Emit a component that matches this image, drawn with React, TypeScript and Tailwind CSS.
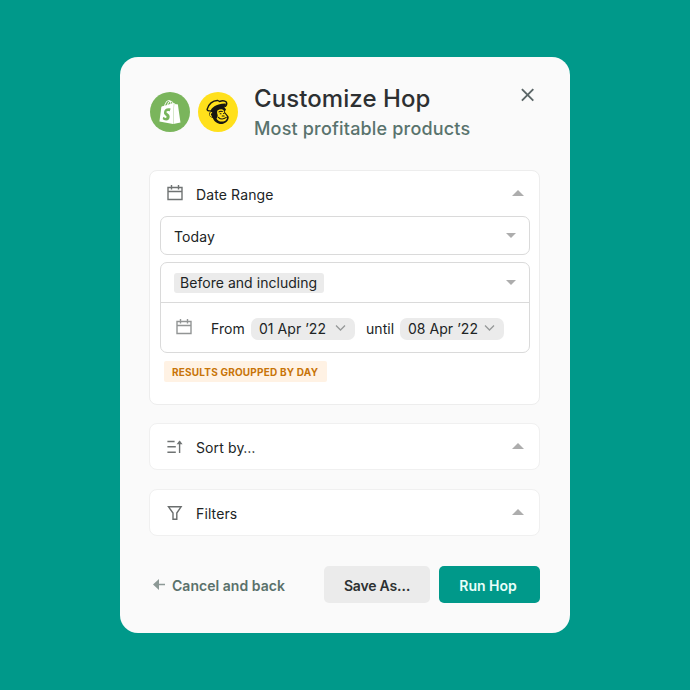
import type { ReactNode } from "react";
import { SiShopify } from "react-icons/si";

function CalendarIcon({ className }: { className: string }) {
  return (
    <svg className={className} width="16" height="16" viewBox="0 0 16 16" fill="none" stroke="currentColor" strokeWidth="1.4">
      <path d="M1 2.5h14v12H1zM1 6.5h14M4.5 0v4.4M11.5 0v4.4" />
    </svg>
  );
}

function MailchimpLogo() {
  return (
    <svg width="26" height="26" viewBox="0 0 26 26" fill="none" strokeLinecap="round" strokeLinejoin="round">
      <path d="M7 8.5 18 6l3 4.5-1.4 2.2 3.8 4.6c1 1.7-.6 6.3-5.2 7.4-4.6 1-8.8-1.6-10.4-5.8-2.4-.4-4-2.2-3.6-4.3.3-1.5 1.3-2.4 2.4-2.8z" fill="#171612" />
      <path d="M12.4 11.6c2.1-1.4 4.3-1.8 6.1-.7l.8 3 2.7 3.5c.6 2.8-1.9 5.3-5 5.2-2.8-.1-4.7-1.5-5.5-3.2 1.2-1.2 1.4-2.4 1-3.8-.4-1.4-.6-2.6-.1-4z" fill="#ffe01b" />
      <path d="M6.6 13.7c-1.6.1-1.9 2.7-.2 3.5" stroke="#ffe01b" strokeWidth="1.2" />
      <path d="M2.1 10.4C3.2 5.2 8 1.2 12.8 1.5l1.7 1c2.2-.9 5.4-.8 6.8.6.8 1.4.3 3.1-.8 4.3-3.6-1.4-8.2-.6-13.5 3.9-2.2 1-4.8.8-4.9-.9z" fill="#ffe01b" stroke="#171612" strokeWidth="1.4" />
      <path d="M13.6 5.6c2.4-.9 4.6-1.3 7.2-1.2.2 1.2-.1 2.2-.6 2.9-4.5-1-8.7 0-13.1 3.9l-1.2-.8c2.2-2.4 4.8-4 7.7-4.8z" fill="#171612" />
      <path d="M14 12.9c1.1-.8 2.2-.9 3.3-.4M15.2 14.7h.8M18.6 14.5h.4M17.2 17h1.9M13.4 18.3c2.1 2.1 5.3 2 7.9.1" stroke="#171612" strokeWidth="1.1" />
    </svg>
  );
}

function SortIcon() {
  return (
    <svg className="mt-0.5 text-[#6f7373]" width="16" height="14" viewBox="0 0 16 14" fill="none" stroke="currentColor" strokeWidth="1.4">
      <path d="M.4 1.5h7.2M.4 6.7h8.4M.4 12.3h8.4M12.6 13V1.6" />
      <path d="m9.6 4.2 3-3.7 3 3.7z" fill="currentColor" stroke="none" />
    </svg>
  );
}

function FilterIcon() {
  return (
    <svg className="mt-0.5 text-[#6a6e6e]" width="16" height="16" viewBox="0 0 16 16" fill="none" stroke="currentColor" strokeWidth="1.4">
      <path d="M1.5 1.8h12.6L9.8 8v6.3H6V8z" />
    </svg>
  );
}

function Triangle({ up = false }: { up?: boolean }) {
  return up ? (
    <svg className="mb-0.5" width="12" height="6" viewBox="0 0 12 6" fill="#adadad"><path d="M0 6 6 0l6 6z" /></svg>
  ) : (
    <svg width="10" height="5" viewBox="0 0 10 5" fill="#adadad"><path d="M0 0h10L5 5z" /></svg>
  );
}

function SectionHeader({ icon, label }: { icon: ReactNode; label: string }) {
  return (
    <div className="flex h-[45px] items-center pr-[15px] pl-[17px]">
      <span className="mb-px flex w-4 justify-center">{icon}</span>
      <span className="mt-[3px] ml-[13px] flex-1 tracking-[0.12px]">{label}</span>
      <Triangle up />
    </div>
  );
}

function DateChip({ date }: { date: string }) {
  return (
    <span className="flex h-[22px] w-[104px] items-center justify-between rounded-[7px] bg-[#ebebeb] pr-[9px] pl-2">
      <span className="mt-px">{date}</span>
      <svg className="mb-0.5" width="11" height="6" viewBox="0 0 11 6" fill="none" stroke="#969999" strokeWidth="1.3"><path d="m1 .5 4.5 4.5L10 .5" /></svg>
    </span>
  );
}

export default function App() {
  return (
    <main className="flex h-[690px] w-[690px] justify-center bg-[#00998a] pt-[57px] font-['Inter',sans-serif] text-sm leading-5 font-normal text-[#202425]">
      <section className="h-[576px] w-[450px] rounded-[18px] bg-[#fafafa] pr-[29px] pl-[29px]">
        <header className="flex h-[113px]">
          <span className="mt-[35px] ml-px flex size-10 items-center justify-center rounded-full bg-[#7ab55c] text-white">
            <SiShopify size={24} />
          </span>
          <span className="mt-[35px] ml-2 flex size-10 items-center justify-center rounded-full bg-[#ffe01b]">
            <MailchimpLogo />
          </span>
          <div className="mt-[27px] ml-4 flex-1">
            <h1 className="text-[24px] leading-[30px] font-medium tracking-[0.08px] text-[#2d3032]">Customize Hop</h1>
            <p className="text-[18px] leading-[30px] font-medium tracking-[0.18px] text-[#59736d]">Most profitable products</p>
          </div>
          <button className="mt-[30px] mr-[5px] flex size-4 items-center justify-center" aria-label="Close">
            <svg width="14" height="14" viewBox="0 0 14 14" stroke="#5b6667" strokeWidth="1.9"><path d="m.9 1.2 11.4 11.4M12.3 1.2.9 12.6" /></svg>
          </button>
        </header>

        <div className="h-[235px] w-[391px] rounded-lg border border-[#ededed] bg-white">
          <SectionHeader icon={<CalendarIcon className="text-[#6f7373]" />} label="Date Range" />
          <div className="mx-[10px] flex h-[39px] w-[370px] items-center justify-between rounded-[7px] border border-[#dadada] pr-[13px] pl-[13px]">
            <span className="mt-0.5 tracking-[0.12px]">Today</span>
            <Triangle />
          </div>
          <div className="mx-[10px] mt-[7px] h-[91px] w-[370px] rounded-[7px] border border-[#dadada]">
            <div className="flex h-[40px] items-center justify-between border-b border-[#dadada] px-[13px]">
              <span className="h-5 w-[150px] rounded-[3px] bg-[#ebebeb] px-1.5 whitespace-nowrap tracking-[0.04px]">Before and including</span>
              <Triangle />
            </div>
            <div className="flex h-[51px] items-center pl-[15px] tracking-[0.04px]">
              <CalendarIcon className="mb-[3px] text-[#929595]" />
              <span className="mt-px ml-[19px] w-[40px]">From</span>
              <DateChip date="01 Apr ’22" />
              <span className="mt-px ml-[11px] w-[34px]">until</span>
              <DateChip date="08 Apr ’22" />
            </div>
          </div>
          <span className="mt-2 ml-[14px] flex h-[21px] w-[163px] items-center rounded-[2px] bg-[#fff2e4] pl-2 text-[10px] font-bold tracking-[0.2px] text-[#c87408]">RESULTS GROUPPED BY DAY</span>
        </div>
        <div className="mt-[18px] h-[47px] w-[391px] rounded-lg border border-[#f0f0f0] bg-white">
          <SectionHeader icon={<SortIcon />} label="Sort by…" />
        </div>
        <div className="mt-[19px] h-[47px] w-[391px] rounded-lg border border-[#f0f0f0] bg-white">
          <SectionHeader icon={<FilterIcon />} label="Filters" />
        </div>

        <footer className="mt-[30px] flex h-[37px] items-center font-semibold text-[#2d3132]">
          <button className="mr-auto ml-1 flex items-center gap-[7px] text-[#5a716b]">
            <svg width="12" height="12" viewBox="0 0 12 12" fill="#8d9996"><path d="M0 5.5 6 0v4.8h6v1.4H6V11z" /></svg>
            <span className="mt-0.5 tracking-[0.03px]">Cancel and back</span>
          </button>
          <button className="h-[37px] w-[106px] rounded-[5px] bg-[#ebebeb] pt-0.5 tracking-[-0.2px]">Save As…</button>
          <button className="mr-px ml-[9px] h-[37px] w-[101px] rounded-[5px] bg-[#00998a] pt-0.5 pr-[3px] text-[#e9fffb]">Run Hop</button>
        </footer>
      </section>
    </main>
  );
}
